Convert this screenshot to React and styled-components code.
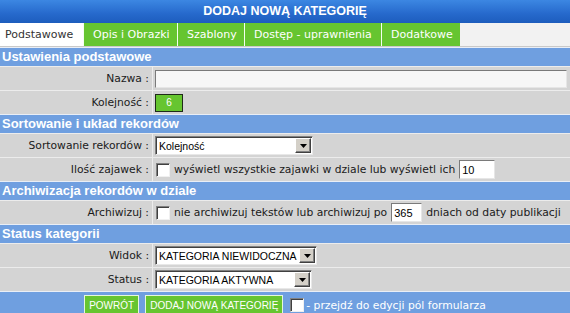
import React from "react";
import styled, { createGlobalStyle } from "styled-components";

const GlobalStyle = createGlobalStyle`
  html, body {
    margin: 0;
    padding: 0;
    background: #d4d4d4;
  }
  body {
    font-family: "DejaVu Sans", Verdana, sans-serif;
    font-size: 10.75px;
    color: #000;
  }
`;

const Panel = styled.div`
  width: 570px;
  height: 313px;
  background: #d4d4d4;
  overflow: hidden;
`;

const TitleBar = styled.div`
  height: 23px;
  line-height: 23px;
  text-align: center;
  color: #fff;
  font-family: "Liberation Sans", Arial, sans-serif;
  font-weight: bold;
  font-size: 12.5px;
  background: linear-gradient(to bottom, #3c87e2 0%, #2669cc 60%, #1d5dbd 100%);
`;

const TabBar = styled.div`
  display: flex;
  height: 23px;
  background: #f2f2f2;
  border-bottom: 1px solid #c9c9c9;
`;

const Tab = styled.div`
  height: 23px;
  line-height: 23px;
  padding-left: ${(p) => (p.$first ? 5 : 9)}px;
  border-left: ${(p) => (p.$first ? "none" : "1px solid #f4fff0")};
  background: ${(p) => (p.$active ? "#ffffff" : "#66c530")};
  color: ${(p) => (p.$active ? "#333" : "#fff")};
  font-size: 11px;
  white-space: nowrap;
  width: ${(p) => p.$w}px;
  box-sizing: border-box;
`;

const SectionHeader = styled.div`
  height: 18px;
  line-height: 18px;
  border-top: 1px solid #e9eef6;
  background: #6f9fe0;
  color: #fff;
  font-family: "Liberation Sans", Arial, sans-serif;
  font-weight: bold;
  font-size: 13px;
  padding-left: 2px;
  white-space: nowrap;
`;

const Row = styled.div`
  display: grid;
  grid-template-columns: 153px 1fr;
  height: 23px;
  border-top: 1px solid #ececec;
`;

const Label = styled.div`
  text-align: right;
  padding-right: 3px;
  line-height: 23px;
  border-right: 1px solid #ececec;
  white-space: nowrap;
  color: #1a1a1a;
`;

const Value = styled.div`
  display: flex;
  align-items: center;
  gap: 4px;
  padding-left: 2px;
  padding-right: 3px;
  white-space: nowrap;
  color: #1a1a1a;
`;

const TextField = styled.input`
  box-sizing: border-box;
  height: ${(p) => p.$h || 19}px;
  width: ${(p) => (p.$w ? `${p.$w}px` : "100%")};
  margin: 0;
  padding: 0 2px;
  font-family: "Liberation Sans", Arial, sans-serif;
  font-size: 11px;
  color: #000;
  background: ${(p) => p.$bg || "#fff"};
  border: 1px solid #9c9c9c;
  border-top-color: #7a7a7a;
  border-left-color: #7a7a7a;
  border-bottom-color: #e6e6e6;
  border-right-color: #e6e6e6;
  outline: none;
`;

const OrderBox = styled.div`
  box-sizing: border-box;
  width: 28px;
  height: 18px;
  background: #66c530;
  border: 1px solid #1f2a1a;
  color: #fff;
  font-family: "Liberation Sans", Arial, sans-serif;
  font-size: 10px;
  line-height: 16px;
  text-align: center;
`;

const SelectBox = styled.div`
  box-sizing: border-box;
  display: flex;
  align-items: center;
  justify-content: space-between;
  width: ${(p) => p.$w}px;
  height: 19px;
  background: #fff;
  border: 1px solid #808080;
  border-right-color: #e8e8e8;
  border-bottom-color: #e8e8e8;
  box-shadow: inset 1px 1px 0 #404040;
  padding: 1px 1px 1px 3px;
  font-family: "Liberation Sans", Arial, sans-serif;
  font-size: 10.5px;
  color: #000;
  white-space: nowrap;
`;

const DropButton = styled.div`
  box-sizing: border-box;
  width: 16px;
  height: 15px;
  flex: none;
  background: #d4d0c8;
  border: 1px solid #fff;
  border-right-color: #404040;
  border-bottom-color: #404040;
  box-shadow: inset -1px -1px 0 #808080;
  display: flex;
  align-items: center;
  justify-content: center;
`;

const Check = styled.span`
  display: inline-block;
  box-sizing: border-box;
  width: 14px;
  height: 14px;
  flex: none;
  background: #fff;
  border: 1px solid #808080;
  border-right-color: #f0f0f0;
  border-bottom-color: #f0f0f0;
  box-shadow: inset 1px 1px 0 #404040;
  margin-left: 1px;
`;

const Footer = styled.div`
  height: 26px;
  border-top: 1px solid #e9eef6;
  background: #6f9fe0;
  display: flex;
  align-items: center;
  justify-content: center;
  gap: 6px;
`;

const GreenButton = styled.button`
  height: 20px;
  margin: 0;
  padding: 0 4px;
  background: #66c530;
  border: 1px solid #e6f7dc;
  color: #fff;
  font-family: "Liberation Sans", Arial, sans-serif;
  font-size: 10px;
  text-transform: uppercase;
  cursor: pointer;
`;

const FooterText = styled.span`
  color: #fff;
  margin-left: -4px;
  white-space: nowrap;
`;

const Arrow = () => (
  <svg width="7" height="4" viewBox="0 0 7 4">
    <path d="M0 0H7L3.5 4Z" fill="#000" />
  </svg>
);

const Select = ({ w, children }) => (
  <SelectBox $w={w}>
    <span>{children}</span>
    <DropButton>
      <Arrow />
    </DropButton>
  </SelectBox>
);

const tabs = [
  { name: "Podstawowe", w: 83, active: true },
  { name: "Opis i Obrazki", w: 94 },
  { name: "Szablony", w: 67 },
  { name: "Dostęp - uprawnienia", w: 137 },
  { name: "Dodatkowe", w: 79 },
];

export default function App() {
  return (
    <>
      <GlobalStyle />
      <Panel>
        <TitleBar>DODAJ NOWĄ KATEGORIĘ</TitleBar>
        <TabBar>
          {tabs.map((t, i) => (
            <Tab key={t.name} $active={t.active} $first={i === 0} $w={t.w}>
              {t.name}
            </Tab>
          ))}
        </TabBar>

        <SectionHeader>Ustawienia podstawowe</SectionHeader>
        <Row>
          <Label>Nazwa :</Label>
          <Value>
            <TextField $bg="#f7f7f7" $h={18} defaultValue="" />
          </Value>
        </Row>
        <Row>
          <Label>Kolejność :</Label>
          <Value>
            <OrderBox>6</OrderBox>
          </Value>
        </Row>

        <SectionHeader>Sortowanie i układ rekordów</SectionHeader>
        <Row>
          <Label>Sortowanie rekordów :</Label>
          <Value>
            <Select w={158}>Kolejność</Select>
          </Value>
        </Row>
        <Row>
          <Label>Ilość zajawek :</Label>
          <Value>
            <Check />
            <span>wyświetl wszystkie zajawki w dziale lub wyświetl ich</span>
            <TextField $w={36} defaultValue="10" />
          </Value>
        </Row>

        <SectionHeader>Archiwizacja rekordów w dziale</SectionHeader>
        <Row>
          <Label>Archiwizuj :</Label>
          <Value>
            <Check />
            <span>nie archiwizuj tekstów lub archiwizuj po</span>
            <TextField $w={31} defaultValue="365" />
            <span>dniach od daty publikacji</span>
          </Value>
        </Row>

        <SectionHeader>Status kategorii</SectionHeader>
        <Row>
          <Label>Widok :</Label>
          <Value>
            <Select w={162}>KATEGORIA NIEWIDOCZNA</Select>
          </Value>
        </Row>
        <Row>
          <Label>Status :</Label>
          <Value>
            <Select w={157}>KATEGORIA AKTYWNA</Select>
          </Value>
        </Row>

        <Footer>
          <GreenButton>Powrót</GreenButton>
          <GreenButton>Dodaj nową kategorię</GreenButton>
          <Check />
          <FooterText>- przejdź do edycji pól formularza</FooterText>
        </Footer>
      </Panel>
    </>
  );
}
